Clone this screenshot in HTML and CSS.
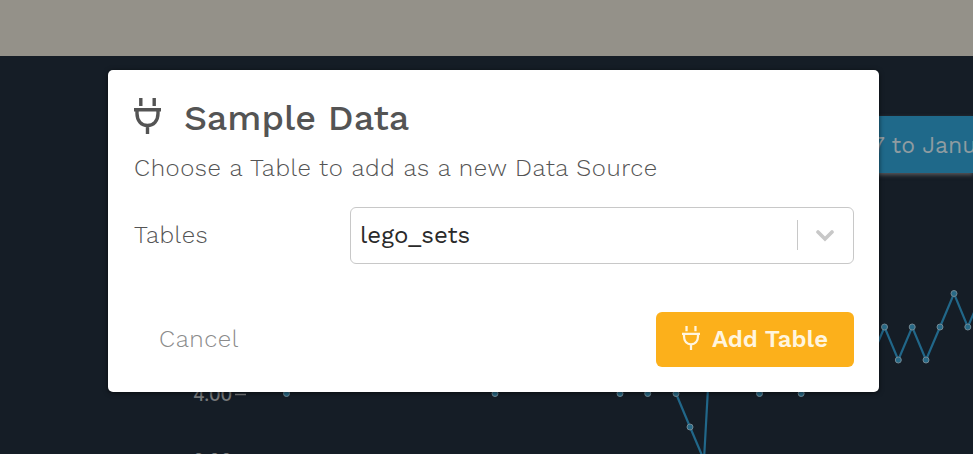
FILE: index.html
```html
<!DOCTYPE html>
<html lang="en">
<head>
<meta charset="utf-8">
<title>Sample Data</title>
<link rel="stylesheet" href="styles.css">
</head>
<body>
<svg width="0" height="0" class="defs">
  <symbol id="plug" viewBox="0 0 27 36">
    <path d="M6.8 0v8M20.2 0v8M0 11.8h27M3 12v3.5C3 23 7.500 27.500 13.500 27.500S24 23 24 15.500V12M13.500 27.500V36" fill="none" stroke="currentColor" stroke-width="3.400"/>
  </symbol>
</svg>
<div class="page">
  <header class="topbar"></header>
  <main class="board">
    <div class="range"><span>7 to January</span></div>
    <svg class="chart" width="973" height="398" viewBox="0 56 973 398">
      <g class="axis">
        <text x="193" y="401" textLength="39">4.00</text>
        <text x="193" y="467" textLength="39">2.00</text>
        <path d="M235 394.500h11"/>
      </g>
      <path class="line" d="M870.500 360L884.500 327L898.300 360L912.200 327L926 360L940 327L954 293.500L967.800 327L982 293.500M676 393.500L690 427L704 460L708 388"/>
      <g class="dots">
        <circle cx="884.500" cy="327" r="3"/><circle cx="898.300" cy="360" r="3"/><circle cx="912.200" cy="327" r="3"/><circle cx="926" cy="360" r="3"/><circle cx="940" cy="327" r="3"/><circle cx="954" cy="293.500" r="3"/><circle cx="967.800" cy="327" r="3"/>
        <circle cx="286.500" cy="393.500" r="3"/><circle cx="495" cy="393.500" r="3"/><circle cx="620" cy="393.500" r="3"/><circle cx="647.700" cy="393.500" r="3"/><circle cx="676" cy="393.500" r="3"/><circle cx="690" cy="427" r="3"/><circle cx="759.500" cy="393.500" r="3"/><circle cx="801.200" cy="393.500" r="3"/>
      </g>
    </svg>
  </main>
</div>
<section class="modal" role="dialog">
  <div class="heading">
    <svg class="plug"><use href="#plug"/></svg>
    <h1>Sample Data</h1>
  </div>
  <p class="intro">Choose a Table to add as a new Data Source</p>
  <div class="field">
    <label>Tables</label>
    <div class="select">
      <span class="value">lego_sets</span>
      <i class="divider"></i>
      <svg class="chevron" viewBox="0 0 18 12"><path d="M2 2l7 7 7-7"/></svg>
    </div>
  </div>
  <div class="actions">
    <button class="cancel">Cancel</button>
    <button class="add"><svg class="plug-small"><use href="#plug"/></svg><span>Add Table</span></button>
  </div>
</section>
</body>
</html>
```
FILE: styles.css
```css
* { box-sizing: border-box; }
body { margin: 0; width: 973px; height: 454px; overflow: hidden; font-family: "Work Sans", Inter, sans-serif; color: #545454; }
.defs { position: absolute; }
.page { height: 454px; background: #151d26; }
.topbar { height: 56px; background: #949189; }
.board { position: relative; height: 398px; overflow: hidden; }
.range { position: absolute; left: 700px; right: 0; top: 60px; height: 57px; padding-left: 172px; background: #1f698a; color: #8f9ca1; font-size: 23px; line-height: 60px; white-space: nowrap; box-shadow: 0 2px 4px #59595c; }
.chart { position: absolute; left: 0; top: 0; }
.axis text { font: 500 18px Inter, sans-serif; fill: #77797b; }
.axis path { stroke: #77797b; stroke-width: 1.5; }
.line { fill: none; stroke: #216789; stroke-width: 2.2; }
.dots { fill: #286a87; stroke: #728994; stroke-width: 1; }
.modal { position: absolute; left: 108px; top: 70px; width: 771px; height: 322px; padding: 26px 25px 25px 26px; background: #fff; border-radius: 5px; box-shadow: 0 1px 5px rgba(0,0,0,.6); }
.heading { display: flex; align-items: center; height: 44px; }
.plug { width: 27px; height: 36px; margin: -5px 23px 0 0; }
h1 { margin: 0; font-size: 36px; font-weight: 500; line-height: 44px; }
.intro { margin: 13px 0 0; font-size: 24px; font-weight: 300; line-height: 30px; letter-spacing: .57px; white-space: nowrap; }
.field { display: flex; align-items: center; height: 57px; margin-top: 24px; }
.field label { width: 216px; padding-bottom: 2px; font-size: 24px; font-weight: 300; letter-spacing: .57px; }
.select { display: flex; align-items: center; width: 504px; height: 57px; border: 1px solid #c8c8c8; border-radius: 6px; padding: 0 0 2px 9px; color: #2a2a2a; font-size: 24px; }
.value { flex: 1; }
.divider { width: 1px; height: 30px; background: #c8c8c8; }
.chevron { width: 18px; height: 12px; margin: 3px 19px 0 18px; }
.chevron path { fill: none; stroke: #c8c8c8; stroke-width: 3.6; stroke-linecap: round; }
.actions { display: flex; justify-content: space-between; margin-top: 48px; }
button { font: inherit; border: 0; padding: 0; height: 55px; white-space: nowrap; }
.cancel { padding: 0 0 2px 25px; background: none; color: #8b8b8b; font-size: 24px; font-weight: 300; letter-spacing: .57px; }
.add { display: flex; align-items: center; width: 198px; padding: 0 0 1px 26px; border-radius: 6px; background: #fcb01b; color: #fff5df; font-size: 24px; font-weight: 600; }
.plug-small { width: 18px; height: 24px; margin: -2px 12px 0 0; }
```
